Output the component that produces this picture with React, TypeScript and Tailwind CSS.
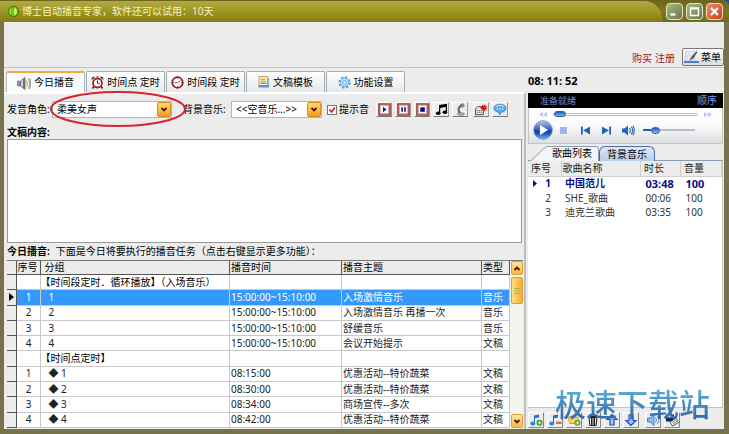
import { useState } from 'react';
import type { ReactNode } from 'react';

type Task = {
  no?: string;
  group: string;
  time?: string;
  title?: string;
  kind?: string;
  section?: boolean;
};

const tasks: Task[] = [
  { group: '【时间段定时．循环播放】（入场音乐）', section: true },
  { no: '1', group: '1', time: '15:00:00~15:10:00', title: '入场激情音乐', kind: '音乐' },
  { no: '2', group: '2', time: '15:00:00~15:10:00', title: '入场激情音乐 再播一次', kind: '音乐' },
  { no: '3', group: '3', time: '15:00:00~15:10:00', title: '舒缓音乐', kind: '音乐' },
  { no: '4', group: '4', time: '15:00:00~15:10:00', title: '会议开始提示', kind: '文稿' },
  { group: '【时间点定时】', section: true },
  { no: '1', group: '◆ 1', time: '08:15:00', title: '优惠活动--特价蔬菜', kind: '文稿' },
  { no: '2', group: '◆ 2', time: '08:30:00', title: '优惠活动--特价蔬菜', kind: '文稿' },
  { no: '3', group: '◆ 3', time: '08:34:00', title: '商场宣传--多次', kind: '文稿' },
  { no: '4', group: '◆ 4', time: '08:42:00', title: '优惠活动--特价蔬菜', kind: '文稿' },
];

const songs = [
  { no: '1', name: '中国范儿', length: '03:48', volume: '100' },
  { no: '2', name: 'SHE_歌曲', length: '00:06', volume: '100' },
  { no: '3', name: '迪克兰歌曲', length: '03:35', volume: '100' },
];

function SpeakerIcon() {
  return (
    <svg className="h-[14px] w-[14px]" viewBox="0 0 14 14">
      <path d="M0.5 5h3v5h-3z" fill="#8b93a5" stroke="#5d6475" strokeWidth=".6" />
      <path d="M3.5 5 8 1.5v12L3.5 10z" fill="#c9ced8" stroke="#5d6475" strokeWidth=".8" />
      <path d="M6 3v9l2 1.5v-12z" fill="#6a7286" />
      <path d="M9.5 4.5c1 1.5 1 4.500 0 6M11 2.500c2 2.500 2 7.500 0 10" fill="none" stroke="#d9b23c" strokeWidth="1.200" />
      <path d="M12.500 2c1.500 3 1.500 8 0 11" fill="none" stroke="#5b7aad" strokeWidth=".8" />
    </svg>
  );
}

function AlarmIcon() {
  return (
    <svg className="h-[13px] w-[13px]" viewBox="0 0 13 13">
      <path d="M3 10.500 1.500 12.500M10 10.500l1.500 2" stroke="#222" strokeWidth="1.500" />
      <path d="M.8 4C0 1.500 2 .2 4 1.200zM12.200 4C13 1.500 11 .2 9 1.200z" fill="#333" />
      <circle cx="6.500" cy="7" r="4.500" fill="#fff" stroke="#a3201f" strokeWidth="1.800" />
      <path d="M6.500 4.500V7.200L8.500 8" fill="none" stroke="#222" strokeWidth="1" />
      <path d="M5.500 1h2" stroke="#a3201f" strokeWidth="1.200" />
    </svg>
  );
}

function ClockIcon() {
  return (
    <svg className="h-[13px] w-[13px]" viewBox="0 0 13 13">
      <circle cx="6.500" cy="6.500" r="5.300" fill="#fff" stroke="#8d1f25" strokeWidth="1.700" />
      <path d="M9.500 4.500 6.500 6.800 4 6.500" fill="none" stroke="#b5444a" strokeWidth="1" />
      <path d="M6.500 2.200v1M6.500 10v1M2.200 6.500h1M10 6.500h1" stroke="#8d1f25" strokeWidth=".8" />
    </svg>
  );
}

function DocIcon() {
  return (
    <svg className="h-[12px] w-[12px]" viewBox="0 0 12 12">
      <path d="M1 .5h8.500v10H1z" fill="#fff3cf" stroke="#b8873a" strokeWidth=".8" />
      <path d="M2.500 2.500h5v2h-5z" fill="#f0a733" />
      <path d="M2.500 6h6M2.500 7.500h6" stroke="#4c7ec2" strokeWidth=".8" />
      <path d="M.5 9h10.500v2.500H.5z" fill="#5a93d2" />
      <path d="M9.500 2.500h1.200V9" fill="none" stroke="#7ea9dc" />
    </svg>
  );
}

function GearIcon() {
  return (
    <svg className="h-[13px] w-[13px]" viewBox="0 0 13 13">
      <circle cx="6.500" cy="6.500" r="5.200" fill="none" stroke="#5ba3dc" strokeWidth="2" strokeDasharray="2.200 1.880" />
      <circle cx="6.500" cy="6.500" r="4.200" fill="#c7e4f7" stroke="#5ba3dc" strokeWidth=".9" />
      <circle cx="6.500" cy="6.500" r="1.800" fill="#fff" stroke="#4d93cf" strokeWidth=".9" />
    </svg>
  );
}

function Framed({ children }: { children: ReactNode }) {
  return (
    <svg className="h-[13px] w-[13px]" viewBox="0 0 13 13">
      <path d="M1 1h11v11H1z" fill="#fff" stroke="#a8312f" strokeWidth="1.600" />
      <path d="M2.500 2.500h8v8h-8z" fill="none" stroke="#777" strokeWidth=".5" />
      {children}
    </svg>
  );
}

const tools = [
  { label: '播放', icon: <Framed><path d="M5 3.800v5.400L8.500 6.500z" fill="#0b1670" /></Framed> },
  { label: '暂停', icon: <Framed><path d="M4.300 4.300h1.600v4.500H4.300zM7.200 4.300h1.600v4.500H7.200z" fill="#0b1670" /></Framed> },
  { label: '停止', icon: <Framed><path d="M4.300 4.300h4.500v4.500H4.300z" fill="#0b0b8a" /></Framed> },
  {
    label: '音乐',
    icon: (
      <svg className="h-[13px] w-[13px]" viewBox="0 0 13 13">
        <path d="M4 2 12 .8v3L5.200 4.900V10H4zM10.800 3.500H12V9h-1.200z" fill="#000" />
        <ellipse cx="3.200" cy="10.200" rx="2.300" ry="1.800" />
        <ellipse cx="9.900" cy="9.300" rx="2.300" ry="1.800" />
      </svg>
    ),
  },
  {
    label: '话筒',
    icon: (
      <svg className="h-[13px] w-[13px]" viewBox="0 0 13 13">
        <path d="M6.500 10C3.500 8 4 4 7.500 2.500" fill="none" stroke="#57657a" strokeWidth="2" />
        <path d="m6.500 1.500 2.500-1 1.500 2.500-2.500 1.500z" fill="#8494aa" stroke="#4b586c" strokeWidth=".6" />
        <ellipse cx="7" cy="11" rx="3.500" ry="1.300" fill="#a9b7c8" stroke="#57657a" strokeWidth=".6" />
      </svg>
    ),
  },
  {
    label: '录音',
    icon: (
      <svg className="h-[13px] w-[15px]" viewBox="0 0 15 13">
        <path d="M1.500 6 4 3.500h5V6h1v6H1.500z" fill="#e9e9e9" stroke="#333" strokeWidth=".9" />
        <path d="M3 7.500h5.500M3 9.500h5.500" stroke="#444" strokeWidth="1" strokeDasharray="1.200 .9" />
        <path d="M6.500 4.500 10 1v2l2-2.500V3h2.500L13 4.700l1.500 1.800H12v2.300l-2-2.300v1.500z" fill="#e01414" />
      </svg>
    ),
  },
  {
    label: '消息',
    icon: (
      <svg className="h-[13px] w-[14px]" viewBox="0 0 14 13">
        <path d="M7 1.200c3.500 0 6 1.700 6 4s-2 3.900-4.500 4L6.500 12l-.8-2.800C2.800 9 1 7.300 1 5.200c0-2.300 2.500-4 6-4z" fill="#5aa9ea" stroke="#2c76bd" strokeWidth=".7" />
        <path d="M3 3.800c2-1.800 6-1.800 8 0" fill="none" stroke="#bfe0fb" strokeWidth="1.200" />
        <path d="M4 5.800h1.200M6.500 5.800h1.200M9 5.800h1.200" stroke="#fff" strokeWidth="1.300" />
      </svg>
    ),
  },
];

const note = <path d="M5 10V2.500l5-1v3l-4 .8V10" fill="#2470c8" />;

const listTools = [
  {
    label: '添加歌曲',
    icon: (
      <>
        {note}
        <ellipse cx="3.800" cy="10.500" rx="2.500" ry="1.900" fill="#2f86dd" />
        <circle cx="10.500" cy="9.800" r="3" fill="#3d9a27" />
        <path d="M8.800 9.800h3.400M10.500 8.100v3.400" stroke="#fff" />
      </>
    ),
  },
  {
    label: '移除歌曲',
    icon: (
      <>
        {note}
        <ellipse cx="3.800" cy="10.500" rx="2.500" ry="1.900" fill="#2f86dd" />
        <path d="M8 8.500h5.500v2.500H8z" fill="#ee6a2e" />
      </>
    ),
  },
  {
    label: '添加文件夹',
    icon: (
      <>
        <path d="M1 4.500 4 3l1.500 1.200H11l1 6.300H3z" fill="#f6d35b" stroke="#c19325" strokeWidth=".8" />
        <circle cx="10.500" cy="9.800" r="3" fill="#58a82b" />
        <path d="M8.800 9.800h3.400M10.500 8.100v3.400" stroke="#fff" />
      </>
    ),
  },
  {
    label: '清空',
    icon: (
      <>
        <path d="M3 4.500h8l-.8 8H3.800z" fill="#ddd" stroke="#222" />
        <path d="M2 3.500h10M5.500 2h3M5.500 5v7M7 5v7M8.500 5v7" stroke="#222" strokeWidth="1" />
      </>
    ),
  },
  { label: '上移', icon: <path d="M7 1.500 12 6.500H9v5.500H5V6.500H2z" fill="#9dc5ff" stroke="#2249c5" strokeWidth="1.200" /> },
  { label: '下移', icon: <path d="M7 12.500 2 7.500h3V2h4v5.500h3z" fill="#9dc5ff" stroke="#2249c5" strokeWidth="1.200" /> },
  {
    label: '音量',
    icon: (
      <>
        <path d="M1.500 5h2.500l4-3.500v11L4 9H1.500z" fill="#7ec0f2" stroke="#2c72c0" strokeWidth=".8" />
        <path d="M9.500 4.500q2 2.500 0 5M11.500 3q3 4 0 8" fill="none" stroke="#4a95da" />
      </>
    ),
  },
  {
    label: '保存',
    icon: (
      <>
        <path d="M1 1.500h8v7H1z" fill="#15225e" />
        <path d="M3 2h4v2.500H3z" fill="#d7def0" />
        <path d="m5 9 6-4 2.500 4.500-6 3.500z" fill="#f6f6f6" stroke="#333" strokeWidth=".8" />
        <path d="m7 9.500 4-2.500M8 11l4-2.500" stroke="#555" strokeWidth=".7" />
      </>
    ),
  },
];

const tabs = [
  { name: '今日播音', icon: <SpeakerIcon /> },
  { name: '时间点 定时', icon: <AlarmIcon /> },
  { name: '时间段 定时', icon: <ClockIcon /> },
  { name: '文稿模板', icon: <DocIcon /> },
  { name: '功能设置', icon: <GearIcon /> },
];

function Chevron({ up = false }: { up?: boolean }) {
  return (
    <svg className="h-[7px] w-[8px]" viewBox="0 0 8 7">
      <path d={up ? 'M1.500 5 4 2.500 6.500 5' : 'M1.500 2 4 4.500 6.500 2'} fill="none" stroke="#4a1a00" strokeWidth="1.800" />
    </svg>
  );
}

function Dropdown({ id, value, className }: { id: string; value: string; className: string }) {
  return (
    <div className={`relative h-[17px] border border-[#b5b5b5] bg-white ${className}`}>
      <select id={id} className="h-full w-full appearance-none bg-transparent pl-1 outline-none">
        <option>{value}</option>
      </select>
      <span className="pointer-events-none absolute top-0 right-0 flex h-[15px] w-[14px] items-center justify-center rounded-xs border border-[#d98a1c] bg-linear-to-b from-[#ffd968] to-[#f79a1e]">
        <Chevron />
      </span>
    </div>
  );
}

function TitleBar() {
  return (
    <header className="flex h-[22px] shrink-0 rounded-t-md bg-linear-to-b from-[#6b641c] via-[#81771b] to-[#746b1b]">
      <div className="flex flex-1 items-center gap-[3px] rounded-tr-[18px] border-t border-[#6e671b] bg-linear-to-b from-[#b0a943] via-[#9f9722] to-[#857b12] pl-2 text-[#f4f0c8]">
        <svg className="h-[11px] w-[11px]" viewBox="0 0 11 11">
          <circle cx="5.500" cy="5.500" r="5" fill="#63c91d" stroke="#24650c" strokeWidth=".8" />
          <path d="M7 1.500c2.500 2 2.500 6 0 8-1.500-2-1.500-6 0-8z" fill="#d9f15c" />
          <path d="M3 2.500c-1.500 2-1.500 4 0 6" stroke="#b0ee65" fill="none" />
        </svg>
        <h1>博士自动播音专家，软件还可以试用：10天</h1>
      </div>
      <div className="flex items-end gap-[3px] pr-[6px] pb-[2px] pl-1">
        <button aria-label="最小化" className="h-[17px] w-[17px] rounded-sm border border-[#e8e6c8] bg-linear-to-br from-[#a9b982] to-[#68784a]">
          <svg viewBox="0 0 15 15"><path d="M3.500 10.500h5" stroke="#fff" strokeWidth="2.200" /></svg>
        </button>
        <button aria-label="最大化" className="h-[17px] w-[17px] rounded-sm border border-[#e8e6c8] bg-linear-to-br from-[#a9b982] to-[#68784a]">
          <svg viewBox="0 0 15 15"><path d="M3.500 4h8v7.500h-8zM3.500 4.800h8" fill="none" stroke="#fff" strokeWidth="1.400" /></svg>
        </button>
        <button aria-label="关闭" className="h-[17px] w-[17px] rounded-sm border border-[#f5d9cc] bg-linear-to-br from-[#f08a64] to-[#cc3c1c]">
          <svg viewBox="0 0 15 15"><path d="m4 4 7 7m0-7-7 7" stroke="#fff" strokeWidth="2.200" /></svg>
        </button>
      </div>
    </header>
  );
}

function TaskTable() {
  const [current, setCurrent] = useState(1);
  return (
    <table className="h-full w-full table-fixed border-collapse bg-white text-left">
      <colgroup>
        <col className="w-[9px]" />
        <col className="w-[24px]" />
        <col />
        <col className="w-[112px]" />
        <col className="w-[140px]" />
        <col className="w-[28px]" />
      </colgroup>
      <thead>
        <tr className="bg-[#ececec]">
          {['', '序号', '分组', '播音时间', '播音主题', '类型'].map((name, i) => (
            <th key={i} className={`border-r border-b border-[#555] p-0 font-normal ${i === 2 ? 'pl-1' : 'pl-px'}`}>{name}</th>
          ))}
        </tr>
      </thead>
      <tbody>
        {tasks.map((task, i) => {
          const cell = 'border-r border-b border-[#c8c8c8] p-0 pl-px';
          return (
            <tr key={i} onClick={() => setCurrent(i)} className={i === current ? 'bg-[#3399ff] text-white' : 'text-[#222]'}>
              <td className="border-r border-b border-[#555] bg-[#ececec] p-0">
                {i === current && (
                  <svg className="ml-[2px] h-[8px] w-[5px]" viewBox="0 0 5 8"><path d="M0 0v8l5-4z" fill="#000" /></svg>
                )}
              </td>
              <td className={`${cell} text-center`}>{task.no}</td>
              <td className={`border-r border-b border-[#c8c8c8] p-0 ${task.section ? 'pl-0 text-black' : 'pl-2'}`}>{task.group}</td>
              <td className={cell}>{task.time}</td>
              <td className={cell}>{task.title}</td>
              <td className={cell}>{task.kind}</td>
            </tr>
          );
        })}
      </tbody>
    </table>
  );
}

function Player() {
  return (
    <section>
      <div className="flex h-[15px] items-center justify-between bg-black pr-[6px] pl-3 text-[#7d9bf0]">
        <span className="text-[9px] text-[#6c88d8]">准备就绪</span>
        <span>顺序</span>
      </div>
      <div className="h-[36px] border border-t-0 border-[#c4c4c4] bg-linear-to-b from-white via-[#fafafa] to-[#dedfe3]">
        <div className="flex h-[12px] items-center gap-[6px] px-[10px]">
          <svg className="h-[5px] w-[8px]" viewBox="0 0 8 5"><path d="M4 0v5L0 2.500zM8 0v5L4 2.500z" fill="#b9cbed" /></svg>
          <div className="flex h-[3px] flex-1 items-center rounded-full border border-[#b9bdc9] bg-white">
            <span className="h-[6px] w-[12px] rounded-full border border-[#2a5cb0] bg-linear-to-b from-[#2a5cb0] to-[#7fb8f5]" />
          </div>
          <svg className="h-[5px] w-[8px]" viewBox="0 0 8 5"><path d="M0 0v5l4-2.500zM4 0v5l4-2.500z" fill="#b9cbed" /></svg>
        </div>
        <div className="flex h-[20px] items-center pl-1">
          <button aria-label="播放">
            <svg className="h-[20px] w-[20px]" viewBox="0 0 20 20">
              <defs>
                <linearGradient id="orb" x1="0" y1="0" x2="0" y2="1">
                  <stop offset="0" stopColor="#b9c8ee" />
                  <stop offset=".45" stopColor="#3b62c4" />
                  <stop offset=".6" stopColor="#15399f" />
                  <stop offset="1" stopColor="#52c4f6" />
                </linearGradient>
              </defs>
              <circle cx="10" cy="10" r="9.300" fill="url(#orb)" stroke="#7d8fc2" strokeWidth=".9" />
              <path d="M7 5v10l8-5z" fill="#fff" />
            </svg>
          </button>
          <button aria-label="停止" className="ml-[7px] h-[7px] w-[7px] bg-[#9db6e6]" />
          <button aria-label="上一首" className="ml-[14px]">
            <svg className="h-[9px] w-[9px]" viewBox="0 0 9 9"><path d="M0 .5h1.800v8H0zM9 .5v8L2.200 4.500z" fill="#2260c0" /></svg>
          </button>
          <button aria-label="下一首" className="ml-3">
            <svg className="h-[9px] w-[9px]" viewBox="0 0 9 9"><path d="M7.200.5H9v8H7.200zM0 .5v8l6.800-4z" fill="#2260c0" /></svg>
          </button>
          <button aria-label="静音" className="ml-[11px]">
            <svg className="h-[11px] w-[13px]" viewBox="0 0 13 11">
              <path d="M0 3.500h2.500L6 .5v10l-3.500-3H0z" fill="#2260c0" />
              <path d="M7.500 3q1.500 2.500 0 5M9.300 1.500q2.500 4 0 8M11 .8q2.500 4.700 0 9.400" fill="none" stroke="#2260c0" strokeWidth="1.100" />
            </svg>
          </button>
          <div className="ml-2 flex h-[2px] w-[52px] items-center bg-[#b9bdc9]">
            <span className="h-[2px] w-2 bg-[#2260c0]" />
            <span className="h-[7px] w-[9px] rounded-full border border-[#2260c0] bg-linear-to-b from-[#2a5cb0] to-[#7fc0f8]" />
          </div>
        </div>
      </div>
    </section>
  );
}

function SongPanel() {
  return (
    <section className="flex min-h-0 flex-1 flex-col pt-[2px]">
      <div className="flex h-[15px] shrink-0 items-end">
        <button className="relative h-[15px] w-[71px] pl-6 text-left">
          <svg className="absolute inset-0 h-full w-full" viewBox="0 0 71 15">
            <path d="M0 14.500h3L17 1.500Q18 .5 20 .5h48q2.500 0 2.500 2.500v12" fill="#f4f5f8" stroke="#8a9bb8" />
          </svg>
          <span className="relative">歌曲列表</span>
        </button>
        <button className="h-[15px] w-[56px] rounded-t-md border border-b-0 border-[#4a6ea8] bg-linear-to-b from-[#dde8f6] to-[#b8cdea]">背景音乐</button>
        <span className="h-px flex-1 bg-[#8a9bb8]" />
      </div>
      <div className="min-h-0 flex-1 border-r border-b border-[#c4c4c4] bg-white">
        <table className="w-full table-fixed text-left">
          <colgroup>
            <col className="w-[33px]" />
            <col />
            <col className="w-[40px]" />
            <col className="w-[41px]" />
          </colgroup>
          <thead>
            <tr className="h-[15px] bg-[#ececec]">
              {['序号', '歌曲名称', '时长', '音量'].map((name, i) => (
                <th key={name} className={`border-r border-b border-[#d0d0d0] p-0 font-normal text-[#222] ${i === 1 ? 'pl-px' : 'pl-[3px]'}`}>{name}</th>
              ))}
            </tr>
          </thead>
          <tbody>
            {songs.map((song, i) => (
              <tr key={song.no} className={i === 0 ? 'h-[15px] font-bold text-[#0c0c80]' : 'h-[14px] text-[#333]'}>
                <td className="p-0">
                  <span className="flex items-center justify-end gap-2 pr-[10px]">
                    {i === 0 && <svg className="h-[7px] w-[4px]" viewBox="0 0 4 7"><path d="M0 0v7l4-3.500z" fill="#0c0c80" /></svg>}
                    {song.no}
                  </span>
                </td>
                <td className="p-0 pl-1">{song.name}</td>
                <td className={i === 0 ? 'p-0 pl-[5px] text-[11px]' : 'p-0 pl-[5px]'}>{song.length}</td>
                <td className={i === 0 ? 'p-0 pl-[5px] text-[11px]' : 'p-0 pl-[5px]'}>{song.volume}</td>
              </tr>
            ))}
          </tbody>
        </table>
      </div>
      <div className="flex h-[21px] shrink-0 items-center gap-[3px] pt-[2px]">
        {listTools.map((tool, i) => (
          <button
            key={tool.label}
            aria-label={tool.label}
            className={`flex h-[16px] w-[16px] items-center justify-center border border-t-white border-r-[#888] border-b-[#888] border-l-white ${i === 6 ? 'ml-[3px]' : ''}`}
          >
            <svg className="h-[14px] w-[14px]" viewBox="0 0 14 14">{tool.icon}</svg>
          </button>
        ))}
      </div>
    </section>
  );
}

export default function App() {
  const [tab, setTab] = useState('今日播音');
  const [chime, setChime] = useState(true);

  return (
    <div className="relative flex h-screen flex-col overflow-hidden bg-[#1d4ea0] font-['Noto_Sans','Noto_Sans_CJK_SC',sans-serif] text-[10px] leading-[13px] whitespace-nowrap text-black">
      <TitleBar />
      <div className="flex min-h-0 flex-1 flex-col border-r-[5px] border-b-[5px] border-l-[4px] border-[#77724b] bg-[#ececec]">
        <div className="flex h-[46px] shrink-0 items-end justify-end gap-[7px] border-b border-[#c2c2c2]">
          <div className="flex gap-[3px] pb-[2px] text-[#a0191c]">
            <a href="#buy">购买</a>
            <a href="#register">注册</a>
          </div>
          <button className="mb-px flex h-[18px] w-[42px] items-center gap-[2px] rounded-xs border border-[#777] bg-linear-to-b from-white to-[#dcdcdc] pl-px">
            <svg className="h-[14px] w-[15px]" viewBox="0 0 15 14">
              <path d="M1.500 1h9v10h-9z" fill="#e6eaf2" stroke="#b9c2d4" strokeWidth=".6" />
              <path d="M0 11h15v2H0z" fill="#4c7fd0" />
              <path d="m12.500 1-5 5.500L5 11l4.500-2.500L13.500 2z" fill="#5b6068" />
              <path d="M3 3v6M5 3v3" stroke="#c5ccda" strokeWidth=".7" />
            </svg>
            菜单
          </button>
        </div>

        <div className="flex min-h-0 flex-1">
          <main className="flex min-w-0 flex-1 flex-col pt-[3px]">
            <nav className="flex h-[21px] shrink-0 gap-px pl-[2px]">
              {tabs.map(({ name, icon }) => (
                <button
                  key={name}
                  onClick={() => setTab(name)}
                  className={`flex w-[79px] items-center justify-center gap-[3px] rounded-t-xs border border-b-0 ${
                    tab === name ? 'border-[#b5babd] border-t-2 border-t-[#f0ac3c] bg-[#fbfbfb]' : 'border-[#a3afb5] bg-linear-to-b from-white to-[#e6e9ea]'
                  }`}
                >
                  {icon}
                  {name}
                </button>
              ))}
            </nav>

            <div className="flex min-h-0 flex-1 flex-col border-t-2 border-r-2 border-t-white border-r-[#bdbdbd] px-px pb-px">
              <div className="flex h-[31px] shrink-0 items-center pl-[2px]">
                <label htmlFor="voice" className="w-[45px]">发音角色:</label>
                <Dropdown id="voice" value="柔美女声" className="w-[120px]" />
                <label htmlFor="bgm" className="ml-[11px] w-[48px]">背景音乐:</label>
                <Dropdown id="bgm" value="<<空音乐...>>" className="w-[91px]" />
                <label className="ml-[5px] flex items-center gap-[2px]">
                  <span className="relative flex h-[10px] w-[10px]">
                    <input
                      type="checkbox"
                      checked={chime}
                      onChange={e => setChime(e.target.checked)}
                      className="h-[10px] w-[10px] appearance-none border border-[#777] bg-white"
                    />
                    {chime && (
                      <svg className="pointer-events-none absolute inset-0" viewBox="0 0 10 10"><path d="m2.500 4.500 2 2.500L8 2.500" fill="none" stroke="#d01c1c" strokeWidth="1.600" /></svg>
                    )}
                  </span>
                  提示音
                </label>
                <div className="ml-[7px] flex gap-[3px]">
                  {tools.map((tool, i) => (
                    <button
                      key={tool.label}
                      aria-label={tool.label}
                      className={`flex h-[15px] w-[16px] items-center justify-center border border-t-white border-r-[#999] border-b-[#777] border-l-white ${i === 5 ? 'ml-[2px]' : ''}`}
                    >
                      {tool.icon}
                    </button>
                  ))}
                </div>
              </div>

              <label htmlFor="script" className="h-[14px] shrink-0 pl-[2px] pt-px font-bold">文稿内容:</label>
              <textarea id="script" className="mr-px ml-[2px] h-[104px] shrink-0 resize-none border border-[#999] bg-white outline-none" />

              <div className="flex h-[17px] shrink-0 items-center gap-[6px] pl-[2px]">
                <h2 className="font-bold">今日播音:</h2>
                <p>下面是今日将要执行的播音任务（点击右键显示更多功能）：</p>
              </div>

              <div className="ml-[2px] flex min-h-0 flex-1 border-t border-[#777]">
                <div className="min-w-0 flex-1">
                  <TaskTable />
                </div>
                <div className="flex w-[13px] flex-col items-center bg-[#f6f4ee]">
                  <button aria-label="向上滚动" className="flex h-[14px] w-[12px] items-center justify-center rounded-xs border border-[#e0a030] bg-linear-to-b from-[#ffe7a0] to-[#fbb540]"><Chevron up /></button>
                  <div className="mt-[2px] flex h-[27px] w-[12px] items-center justify-center rounded-xs border border-[#e0a030] bg-linear-to-r from-[#ffdf80] to-[#f9ab30]">
                    <svg className="h-[6px] w-[6px]" viewBox="0 0 6 6"><path d="M0 .5h6M0 3h6M0 5.500h6" stroke="#a9ad54" /></svg>
                  </div>
                  <button aria-label="向下滚动" className="mt-auto flex h-[14px] w-[12px] items-center justify-center rounded-xs border border-[#e0a030] bg-linear-to-b from-[#ffe7a0] to-[#fbb540]"><Chevron /></button>
                </div>
              </div>
            </div>
          </main>

          <aside className="ml-[2px] flex w-[196px] shrink-0 flex-col pr-px">
            <time className="flex h-[25px] shrink-0 items-center text-[11px] font-bold">08: 11: 52</time>
            <Player />
            <SongPanel />
          </aside>
        </div>
      </div>

      <svg className="pointer-events-none absolute top-[90px] left-[49px] h-[38px] w-[138px]" viewBox="0 0 138 38">
        <ellipse cx="69" cy="19" rx="67" ry="17" fill="none" stroke="#d8232e" strokeWidth="2" />
      </svg>
      <div className="pointer-events-none absolute right-[19px] bottom-[12px] bg-linear-to-b from-[#62b8dc] to-[#2f5f9e] bg-clip-text text-[31px] leading-[36px] font-medium text-transparent">极速下载站</div>
    </div>
  );
}
